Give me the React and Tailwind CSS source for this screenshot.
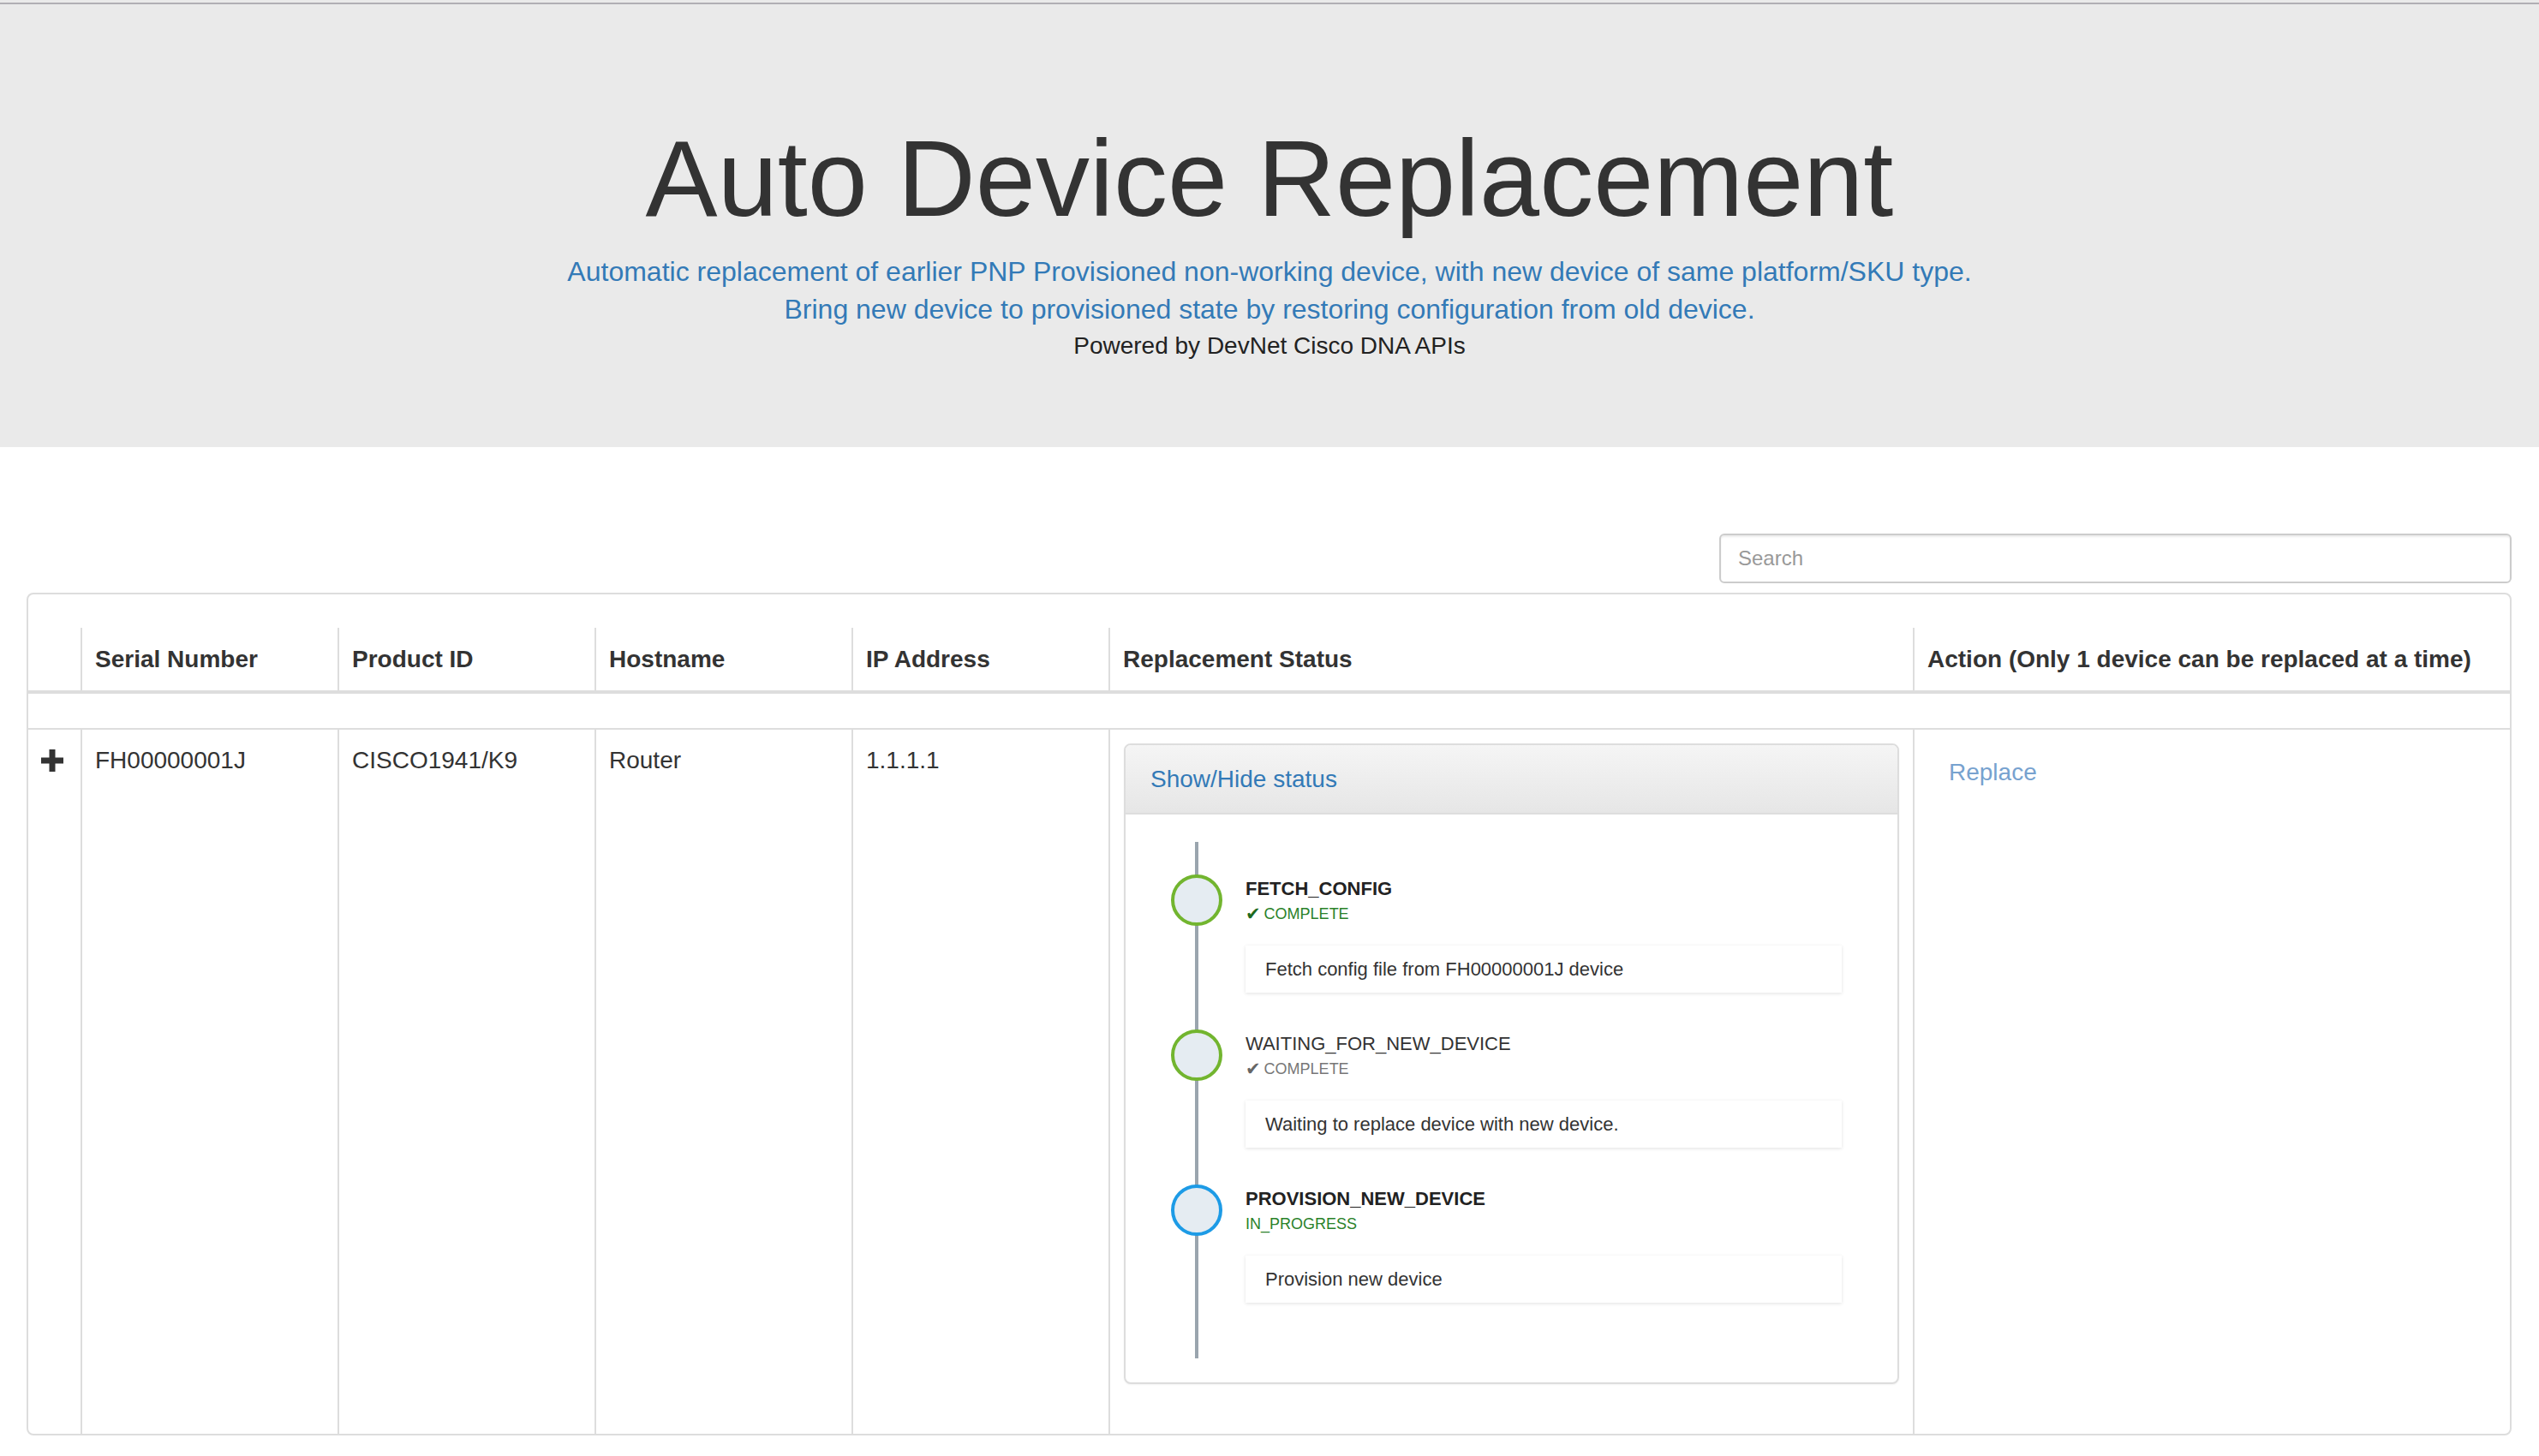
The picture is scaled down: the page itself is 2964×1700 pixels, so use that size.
import React from "react";

function PlusIcon() {
  return (
    <svg width="26" height="26" viewBox="0 0 26 26" aria-hidden="true">
      <rect x="9.5" y="0" width="7" height="26" fill="#333" />
      <rect x="0" y="9.5" width="26" height="7" fill="#333" />
    </svg>
  );
}

const steps = [
  {
    name: "FETCH_CONFIG",
    nameClass: "font-bold text-[#222]",
    status: "COMPLETE",
    check: true,
    statusClass: "text-[#2a822a]",
    checkClass: "text-[#1e6a1e]",
    ring: "border-[#72b52f]",
    desc: "Fetch config file from FH00000001J device",
  },
  {
    name: "WAITING_FOR_NEW_DEVICE",
    nameClass: "font-normal text-[#333]",
    status: "COMPLETE",
    check: true,
    statusClass: "text-[#777]",
    checkClass: "text-[#666]",
    ring: "border-[#72b52f]",
    desc: "Waiting to replace device with new device.",
  },
  {
    name: "PROVISION_NEW_DEVICE",
    nameClass: "font-bold text-[#222]",
    status: "IN_PROGRESS",
    check: false,
    statusClass: "text-[#2a822a]",
    checkClass: "",
    ring: "border-[#1d9be6]",
    desc: "Provision new device",
  },
];

const headers = [
  "Serial Number",
  "Product ID",
  "Hostname",
  "IP Address",
  "Replacement Status",
  "Action (Only 1 device can be replaced at a time)",
];

function Step({ s }) {
  return (
    <div className="flex items-start">
      <div
        className={`relative z-10 w-[60px] h-[60px] shrink-0 rounded-full border-4 bg-[#e5ecf2] ${s.ring}`}
      />
      <div className="ml-[27px] flex-1">
        <div className={`text-[22px] leading-[33px] ${s.nameClass}`}>{s.name}</div>
        <div className="text-[18px] leading-[26px] flex items-center">
          {s.check && (
            <span
              className={`mr-[4px] text-[21px] leading-[26px] font-['DejaVu_Sans',sans-serif] ${s.checkClass}`}
            >
              ✔
            </span>
          )}
          <span className={s.statusClass}>{s.status}</span>
        </div>
        <div className="mt-[24px] h-[55px] flex items-center px-[23px] bg-white text-[22px] text-[#333] shadow-[0_1px_4px_rgba(0,0,0,0.12)]">
          {s.desc}
        </div>
      </div>
    </div>
  );
}

function StatusPanel() {
  return (
    <div className="mb-[42px] border-2 border-[#ddd] rounded-[8px] bg-white shadow-[0_1px_2px_rgba(0,0,0,0.05)]">
      <div className="h-[81px] flex items-center px-[29px] border-b-2 border-[#ddd] rounded-t-[6px] bg-gradient-to-b from-[#f5f5f5] to-[#e6e6e6]">
        <span className="text-[28px] text-[#337ab7]">Show/Hide status</span>
      </div>
      <div className="pt-[32px] pb-[28px] pl-[53px] pr-[65px]">
        <div className="relative pt-[38px] pb-[65px] flex flex-col gap-[43px]">
          <div className="absolute left-[28px] top-0 bottom-0 w-[4px] bg-[#9aa5ae]" />
          {steps.map((s) => (
            <Step key={s.name} s={s} />
          ))}
        </div>
      </div>
    </div>
  );
}

export default function App() {
  return (
    <div className="min-h-[1700px] bg-white text-[#333] font-['Liberation_Sans',Arial,sans-serif]">
      <header className="bg-[#eaeaea] pt-[3px]">
        <div className="h-[2px] bg-[#b1afb4]" />
        <div className="pt-[135px] pb-[97px] text-center">
          <h1 className="text-[126px] leading-[138px] font-normal text-[#333]">
            Auto Device Replacement
          </h1>
          <div className="mt-[17px] text-[32px] leading-[44px] text-[#337ab7]">
            <p>
              Automatic replacement of earlier PNP Provisioned non-working device, with new
              device of same platform/SKU type.
            </p>
            <p>Bring new device to provisioned state by restoring configuration from old device.</p>
          </div>
          <p className="text-[28px] leading-[42px] text-[#222]">Powered by DevNet Cisco DNA APIs</p>
        </div>
      </header>

      <main className="pl-[31px] pr-[32px] pt-[101px]">
        <div className="flex justify-end">
          <input
            type="text"
            placeholder="Search"
            className="w-[925px] h-[58px] border-2 border-[#cccccc] rounded-[6px] px-[20px] text-[24px] text-[#555] placeholder:text-[#999] shadow-[inset_0_2px_2px_rgba(0,0,0,0.075)] outline-none bg-white"
          />
        </div>

        <div className="mt-[11px] border-2 border-[#ddd] rounded-[8px] bg-white">
          <div className="h-[39px]" />
          <div className="grid grid-cols-[61px_300px_300px_300px_300px_939px_1fr] h-[77px] border-b-4 border-[#ddd]">
            <div />
            {headers.map((h) => (
              <div
                key={h}
                className="border-l-2 border-[#ddd] flex items-center px-[15px] text-[28px] font-bold text-[#333] whitespace-nowrap"
              >
                {h}
              </div>
            ))}
          </div>
          <div className="h-[42px] border-b-2 border-[#ddd]" />
          <div className="grid grid-cols-[61px_300px_300px_300px_300px_939px_1fr] text-[28px] leading-[40px] text-[#333]">
            <div className="pt-[23px] pl-[15px]">
              <PlusIcon />
            </div>
            <div className="border-l-2 border-[#ddd] pt-[16px] pb-[16px] px-[15px]">FH00000001J</div>
            <div className="border-l-2 border-[#ddd] pt-[16px] pb-[16px] px-[15px]">CISCO1941/K9</div>
            <div className="border-l-2 border-[#ddd] pt-[16px] pb-[16px] px-[15px]">Router</div>
            <div className="border-l-2 border-[#ddd] pt-[16px] pb-[16px] px-[15px]">1.1.1.1</div>
            <div className="border-l-2 border-[#ddd] pt-[16px] pb-[16px] px-[16px]">
              <StatusPanel />
            </div>
            <div className="border-l-2 border-[#ddd] pt-[16px] pb-[16px] px-[16px]">
              <span className="inline-block px-[24px] py-[14px] leading-[40px] text-[#77a2cf]">
                Replace
              </span>
            </div>
          </div>
        </div>
      </main>
    </div>
  );
}
